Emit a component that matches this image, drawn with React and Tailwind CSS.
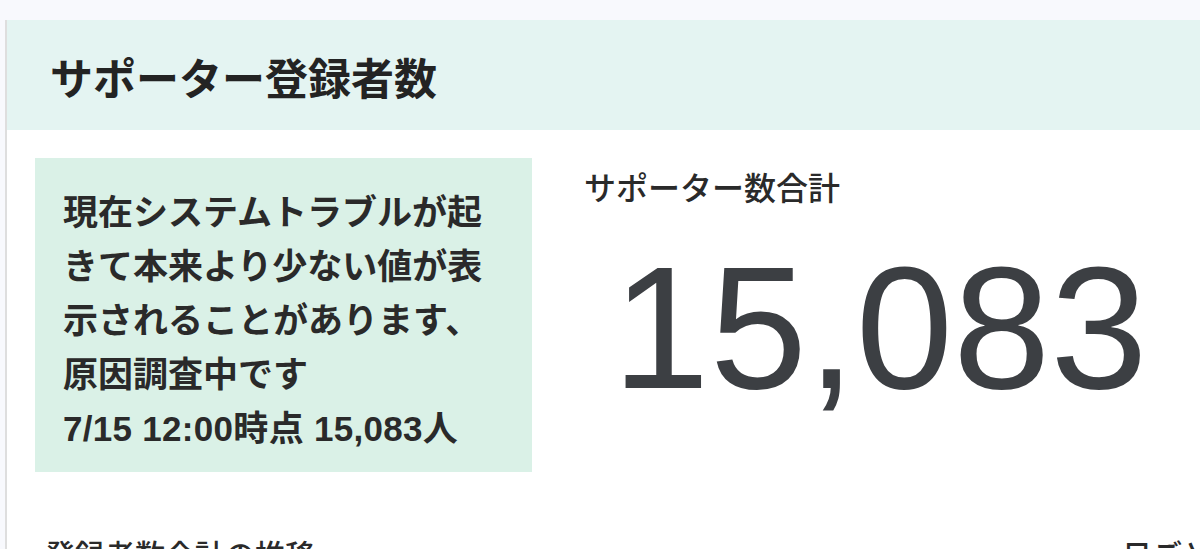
export default function App() {
  const jp = { fontFamily: '"Liberation Sans", "Noto Sans CJK JP", sans-serif' };
  return (
    <div className="h-[549px] w-[1200px] overflow-hidden bg-[#f8f9fd] pt-5" style={jp}>
      <div className="ml-[5px] w-[1260px] border-l-2 border-[#dedede] bg-white">
        <div className="h-[110px] bg-[#e4f4f2] pl-[43px] pt-[28px]">
          <h1 className="text-[43px] font-bold leading-[64px] text-[#232323]">サポーター登録者数</h1>
        </div>
        <div className="flex pl-[28px] pt-[28px]">
          <div className="w-[497px] shrink-0 bg-[#daf1e7] pb-[16px] pl-[28px] pt-[28px]">
            <p className="text-[35px] font-bold leading-[54px] text-[#2a2a2a] whitespace-nowrap">
              現在システムトラブルが起
              <br />
              きて本来より少ない値が表
              <br />
              示されることがあります、
              <br />
              原因調査中です
              <br />
              <span className="tracking-[0.3px]">7/15 12:00時点 15,083人</span>
            </p>
          </div>
          <div className="ml-[28px] w-[640px] shrink-0">
            <div className="mt-[9px] pl-[24px] text-[32px] font-medium leading-[45px] text-[#2a2a2a]">サポーター数合計</div>
            <div className="mt-[28px] text-center text-[175px] leading-none text-[#3c3f43]">15,083</div>
          </div>
        </div>
        <div className="mt-[61px] flex justify-between pl-[38px] pr-[53px] text-[30px] font-medium leading-[45px] text-[#2a2a2a]">
          <span>登録者数合計の推移</span>
          <span>日ごと</span>
        </div>
        <div className="h-[200px]" />
      </div>
    </div>
  );
}
